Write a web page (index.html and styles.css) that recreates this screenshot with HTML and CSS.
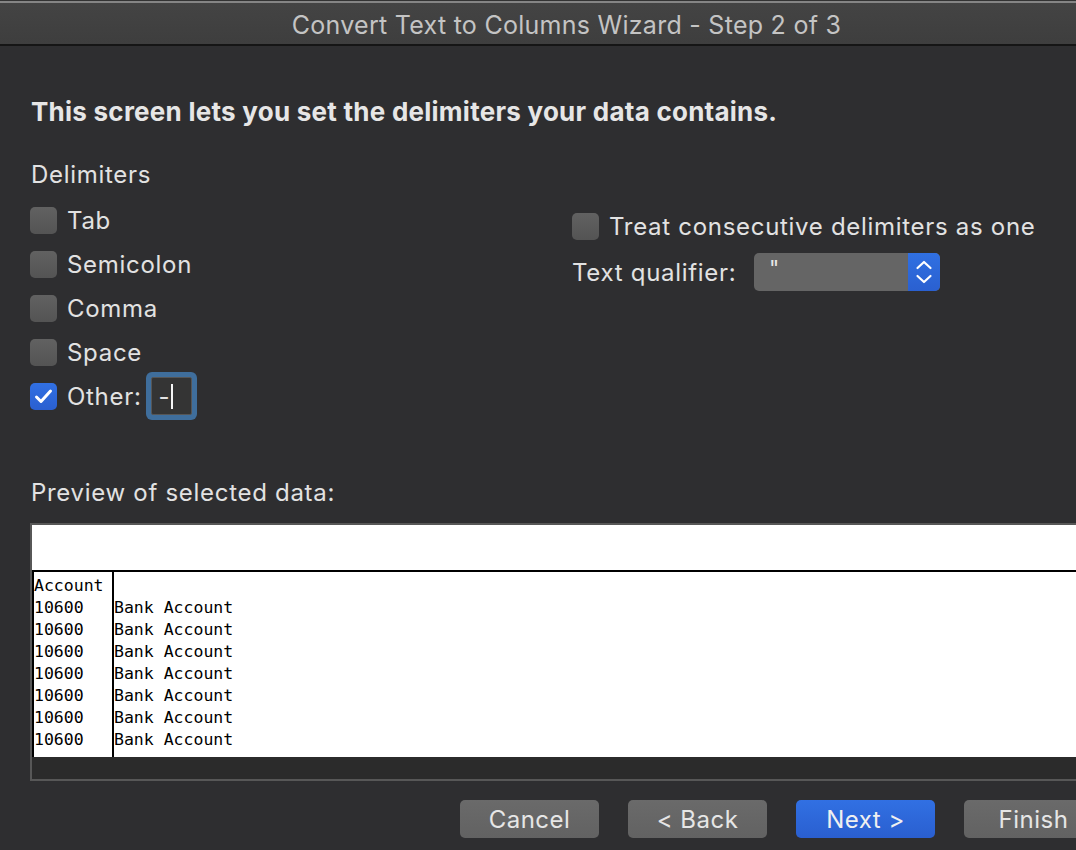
FILE: index.html
```html
<!DOCTYPE html>
<html>
<head>
<meta charset="utf-8">
<link rel="stylesheet" href="styles.css">
</head>
<body>
<div class="window">
  <div class="titlebar">Convert Text to Columns Wizard - Step 2 of 3</div>
  <div class="content">
    <h1 class="heading">This screen lets you set the delimiters your data contains.</h1>
    <div class="options">
      <div class="delims">
        <div class="section-label">Delimiters</div>
        <div class="check-row"><span class="box"></span><span class="label">Tab</span></div>
        <div class="check-row"><span class="box"></span><span class="label">Semicolon</span></div>
        <div class="check-row"><span class="box"></span><span class="label">Comma</span></div>
        <div class="check-row"><span class="box"></span><span class="label">Space</span></div>
        <div class="check-row">
          <span class="box checked"><svg width="27" height="27" viewBox="0 0 27 27"><polyline points="6.5,14 11,18.5 20.5,8" fill="none" stroke="#fff" stroke-width="3" stroke-linecap="round" stroke-linejoin="round"/></svg></span>
          <span class="label">Other:</span>
          <span class="other-field"><span class="dash">-</span><span class="caret"></span></span>
        </div>
      </div>
      <div class="extra">
        <div class="check-row"><span class="box"></span><span class="label">Treat consecutive delimiters as one</span></div>
        <div class="qualifier-row">
          <span class="qualifier-label">Text qualifier:</span>
          <div class="select">
            <span class="select-value">"</span>
            <span class="select-arrows"><svg width="32" height="38" viewBox="0 0 32 38"><polyline points="9.5,15 16,9 22.5,15" fill="none" stroke="#fff" stroke-width="2.2" stroke-linecap="round" stroke-linejoin="round"/><polyline points="9.5,23 16,29 22.5,23" fill="none" stroke="#fff" stroke-width="2.2" stroke-linecap="round" stroke-linejoin="round"/></svg></span>
          </div>
        </div>
      </div>
    </div>
    <div class="section-label preview-label">Preview of selected data:</div>
    <div class="preview">
      <div class="preview-head"></div>
      <div class="preview-grid">
        <div class="col col-1">Account<br>10600<br>10600<br>10600<br>10600<br>10600<br>10600<br>10600</div>
        <div class="col col-2">&nbsp;<br>Bank Account<br>Bank Account<br>Bank Account<br>Bank Account<br>Bank Account<br>Bank Account<br>Bank Account</div>
      </div>
      <div class="preview-scroll"></div>
    </div>
    <div class="buttons">
      <button class="btn">Cancel</button>
      <button class="btn">&lt; Back</button>
      <button class="btn primary">Next &gt;</button>
      <button class="btn">Finish</button>
    </div>
  </div>
</div>
</body>
</html>
```
FILE: styles.css
```css
html, body {
  margin: 0;
  padding: 0;
  background: #2e2e30;
  overflow: hidden;
}

.window {
  width: 1133px;
  height: 850px;
  font-family: Inter, "Noto Sans", sans-serif;
  color: #e2e2e2;
}

.titlebar {
  box-sizing: border-box;
  height: 46px;
  border-top: 1px solid #333;
  border-bottom: 2px solid #151515;
  box-shadow: inset 0 2px 0 #858585;
  background: linear-gradient(#444, #3e3e3e);
  color: #c4c4c4;
  font-size: 25px;
  letter-spacing: 0.27px;
  line-height: 43px;
  padding-top: 3px;
  text-align: center;
}

.content {
  padding: 0 30px 0 31px;
}

.heading {
  margin: 50px 0 0;
  font-size: 26px;
  font-weight: 700;
  letter-spacing: 0.25px;
  line-height: 32px;
  color: #e6e6e6;
}

.options {
  display: flex;
  margin-top: 32px;
}

.delims {
  width: 541px;
  flex-shrink: 0;
}

.section-label {
  font-size: 24px;
  letter-spacing: 0.7px;
  line-height: 30px;
  margin-bottom: 8px;
}

.check-row {
  display: flex;
  align-items: center;
  height: 44px;
  font-size: 24px;
  letter-spacing: 0.7px;
}

.box {
  box-sizing: border-box;
  width: 27px;
  height: 27px;
  border-radius: 5px;
  background: linear-gradient(#616161, #545454);
  margin-right: 10px;
  margin-left: -1px;
  flex-shrink: 0;
}

.box.checked {
  background: linear-gradient(#3170e3, #2a5fd0);
}

.box svg {
  display: block;
}

.other-field {
  box-sizing: border-box;
  display: flex;
  align-items: center;
  width: 41px;
  height: 38px;
  margin-left: 9px;
  padding-left: 7px;
  background: #343434;
  border: 1px solid #565656;
  border-radius: 2px;
  box-shadow: 0 0 0 5px #3f6e9c;
}

.dash {
  font-size: 24px;
  color: #e2e2e2;
}

.caret {
  width: 2px;
  height: 25px;
  background: #f5f5f5;
  margin-left: 1px;
}

.extra {
  margin-top: 44px;
}

.extra .box {
  margin-left: 0;
}

.qualifier-row {
  display: flex;
  align-items: center;
  height: 40px;
  margin-top: 4px;
  font-size: 24px;
  letter-spacing: 0.7px;
}

.qualifier-label {
  width: 182px;
  flex-shrink: 0;
}

.select {
  display: flex;
  width: 186px;
  height: 38px;
  border-radius: 5px;
  background: #656565;
  overflow: hidden;
}

.select-value {
  flex: 1;
  padding-left: 15px;
  font-size: 22px;
  line-height: 30px;
  color: #e8e8e8;
}

.select-arrows {
  width: 32px;
  height: 38px;
  background: linear-gradient(#3070e2, #2a60d0);
}

.select-arrows svg {
  display: block;
}

.preview-label {
  margin-top: 60px;
  margin-bottom: 0;
}

.preview {
  margin-top: 15px;
  margin-left: -1px;
  border: 2px solid #575757;
  background: #2b2b2b;
}

.preview-head {
  height: 45px;
  background: #fff;
  border-bottom: 2px solid #000;
}

.preview-grid {
  display: flex;
  height: 185px;
  background: #fff;
  font-family: "DejaVu Sans Mono", "Liberation Mono", monospace;
  font-size: 16.5px;
  line-height: 22px;
  color: #000;
}

.col {
  box-sizing: border-box;
  padding-top: 3px;
  height: 185px;
}

.col-1 {
  width: 82px;
  border-left: 2px solid #000;
  border-right: 2px solid #000;
}

.col-2 {
  flex: 1;
}

.preview-scroll {
  height: 22px;
  background: #2b2b2b;
}

.buttons {
  display: flex;
  justify-content: flex-end;
  gap: 29px;
  margin-top: 19px;
}

.btn {
  width: 139px;
  height: 38px;
  border: none;
  border-radius: 5px;
  background: linear-gradient(#6a6a6a, #626262);
  color: #e6e6e6;
  font-family: Inter, "Noto Sans", sans-serif;
  font-size: 24px;
  letter-spacing: 0.5px;
  padding: 0;
}

.btn.primary {
  background: linear-gradient(#3170e3, #2a5fd0);
  color: #f0f0f0;
}
```
